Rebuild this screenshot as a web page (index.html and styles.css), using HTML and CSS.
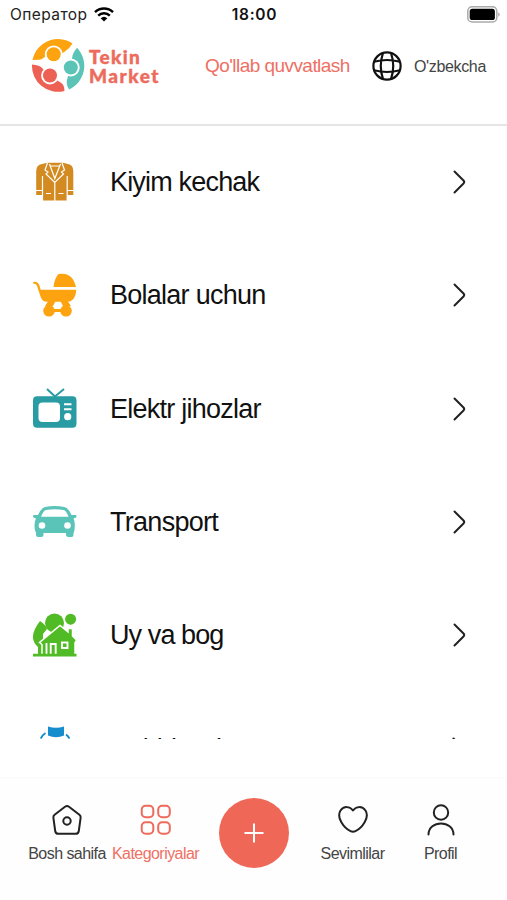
FILE: index.html
```html
<!DOCTYPE html>
<html lang="uz">
<head>
<meta charset="utf-8">
<title>Tekin Market</title>
<link rel="stylesheet" href="styles.css">
</head>
<body>
<div class="status">
  <div class="carrier"><span class="carrier-name">Оператор</span>
    <svg class="wifi" viewBox="0 0 20 15"><g fill="none" stroke="#000" stroke-width="2.5"><path d="M1 5.2a13 13 0 0 1 18 0"/><path d="M4.2 8.6a8.3 8.3 0 0 1 11.6 0"/></g><path d="M6.7 11.3a4.8 4.8 0 0 1 6.6 0L10 14.6Z"/></svg>
  </div>
  <span class="clock">18:00</span>
  <svg class="battery" viewBox="0 0 33 17"><rect x=".8" y=".8" width="29" height="15.2" rx="4.3" fill="#fff" stroke="#aaa" stroke-width="1.5"/><rect x="2.7" y="2.8" width="25.2" height="11.2" rx="2.6"/><path d="M31.2 6.2v4.6q1.6-.8 1.6-2.3t-1.6-2.3" fill="#aaa"/></svg>
</div>
<header class="header">
  <div class="brand">
    <svg class="brand-mark" viewBox="0 0 54 54">
      <path d="M1.500 21A26 26 0 0 1 41.500 4.500Q39 9 34 12.500L30 15Q22 15 15 17Q11 20.500 8 20.700Z" fill="#fda310"/>
      <path d="M46 8.800A26 26 0 0 1 38 50.500Q35 46 36 41L38 33L41 20Q41 15 46 8.800Z" fill="#5bc4b7"/>
      <path d="M1 25.500A26 26 0 0 0 33.500 52L33 48Q32 44 27 42L19 36L11 29Q9 26 1 25.500Z" fill="#ed6054"/>
      <g fill="#fff"><circle cx="22.700" cy="15.300" r="8.900"/><circle cx="39.800" cy="28.500" r="8.900"/><circle cx="19" cy="36.500" r="8.900"/></g>
      <circle cx="22.700" cy="15.300" r="7" fill="#fda310"/>
      <circle cx="39.800" cy="28.500" r="7" fill="#5bc4b7"/>
      <circle cx="19" cy="36.500" r="7" fill="#ed6054"/>
    </svg>
    <div class="brand-name"><span class="brand-a">Tekin</span><span class="brand-b">Market</span></div>
  </div>
  <a class="support">Qo'llab quvvatlash</a>
  <svg class="globe" viewBox="0 0 30 30" fill="none" stroke="#111" stroke-width="2.2"><circle cx="15" cy="15" r="13.6"/><path d="M11 2Q6.5 15 11 28M19 2Q23.5 15 19 28M2 10.700Q15 7.300 28 10.700M2 19.300Q15 22.700 28 19.300"/></svg>
  <span class="lang">O'zbekcha</span>
</header>
<main class="list">
  <div class="row">
    <svg class="icon" viewBox="0 0 44 44"><path d="M3.2 34V10Q3.2 4 9 3L14.5 1.800H30L35 3Q40.300 4 40.300 10V34H34V39.500H10V34Z" fill="#d38b21"/><g fill="none" stroke="#fff" stroke-width="1.200"><path d="M14.500 2L12 9l3 2-2 2 8.800 8.500L30.500 13l-2-2 3-2L29 2M17 5h10M16.500 3L21.800 17.500 27.500 3M21.800 20v20M9.500 15v25M34.200 15v25M3 29.500h6.500M34.200 29.500H41M13 32.500h5M25.500 32.500h5"/></g></svg>
    <span class="label l1">Kiyim kechak</span><svg class="chev" viewBox="0 0 14 24"><path d="M1.500 1.500l9 9q1.400 1.500 0 3l-9 9"/></svg>
  </div>
  <div class="row">
    <svg class="icon up" viewBox="0 0 44 44" fill="#fda310"><path d="M1.200 8.800q4.300 0 5.300 4l1.200 4H43.200q-.2 6-3 9.500-2.200 2.500-6 2.500H14q-4.500 0-6.200-4.500L4 13q-.7-2.300-2.800-2.300Q0 10.500 0 9.700T1.200 8.800Z"/><path d="M20.500 14Q21.500 5 25.500 1q14-2.500 17.500 13Z"/><circle cx="16" cy="37.800" r="5.800"/><circle cx="33" cy="37.800" r="5.800"/><path d="M16 27l-4 6h8l3-6ZM27 27l3 6h8l-4-6ZM20 36h9v3h-9Z"/></svg>
    <span class="label l2">Bolalar uchun</span><svg class="chev" viewBox="0 0 14 24"><path d="M1.500 1.500l9 9q1.400 1.500 0 3l-9 9"/></svg>
  </div>
  <div class="row">
    <svg class="icon" viewBox="0 0 44 44"><path d="M14 2l8 7.500L31 2" fill="none" stroke="#299ba3" stroke-width="2"/><rect y="9.200" width="43.500" height="31.500" rx="4" fill="#299ba3"/><rect x="5.500" y="15.500" width="21.500" height="19.500" rx="4" fill="#fff"/><path d="M31 17.300h7.500M31 22.300h7.500" stroke="#fff" stroke-width="2"/><circle cx="34.700" cy="29.700" r="3.600" fill="#fff"/></svg>
    <span class="label l3">Elektr jihozlar</span><svg class="chev" viewBox="0 0 14 24"><path d="M1.500 1.500l9 9q1.400 1.500 0 3l-9 9"/></svg>
  </div>
  <div class="row">
    <svg class="icon" viewBox="0 0 44 44"><path d="M.8 15H5Q8.200 8 12 7q9.700-1.800 19.500 0 4 1 7 8h4q1 0 1 1.200t-1 1.600l-2 .7q1.400 2.500 1.300 6.500 0 6-1.300 8V35q0 2-2 2h-3q-2.500 0-2.500-2v-2H10.500v2q0 2-2.300 2H5q-2 0-2-2v-2.500Q1.500 30.500 1.500 25q0-4 1.500-6.500L1 17.800q-1-.4-1-1.500T.8 15Z" fill="#5bc4b9"/><path d="M8 16.700Q10.500 10.500 13 10q8.700-1.700 17.500 0 2.700.5 5 6.700Z" fill="#fff"/><circle cx="9" cy="25.500" r="3.300" fill="#fff"/><circle cx="34.500" cy="25.500" r="3.300" fill="#fff"/></svg>
    <span class="label l4">Transport</span><svg class="chev" viewBox="0 0 14 24"><path d="M1.500 1.500l9 9q1.400 1.500 0 3l-9 9"/></svg>
  </div>
  <div class="row">
    <svg class="icon up" viewBox="0 0 44 44" fill="#51bb25"><path d="M7 8Q-6 25 5 34v8h5V21l4-5Q13 12 7 8Z"/><circle cx="21.500" cy="10" r="9.500"/><circle cx="37.600" cy="6.200" r="5.500"/><path d="M9 43V31.500L6.500 29.500 27 12.500l8 6.500v-3.500h4.500V23l4 4-1.500 3V43Z" stroke="#fff" stroke-width="1.500"/><path d="M0 40.800h43.500v2.700H0Z"/><path d="M13.500 30v10.800M17.700 40.800V31h5v9.800" fill="none" stroke="#fff" stroke-width="1.900"/><rect x="29" y="29.500" width="5.500" height="5.500" fill="none" stroke="#fff" stroke-width="1.900"/></svg>
    <span class="label l5">Uy va bog</span><svg class="chev" viewBox="0 0 14 24"><path d="M1.500 1.500l9 9q1.400 1.500 0 3l-9 9"/></svg>
  </div>
  <div class="row">
    <svg class="icon up" viewBox="0 0 44 44" fill="#168dcd"><path d="M15 .5q8 2.500 16 0v9q-8 3.500-16 0Z"/><path d="M12.500 7q-3 2-4.800 5.500M33 8.500q2 1.500 3.500 4" fill="none" stroke="#168dcd" stroke-width="1.800"/></svg>
    <span class="label l6">Hobbi va k</span><svg class="chev last" viewBox="0 0 14 24"><path d="M1.500 1.500l9 9q1.400 1.500 0 3l-9 9"/></svg>
  </div>
</main>
<nav class="nav">
  <div class="tab t1"><svg viewBox="0 0 32 32"><path d="M14 2.800q2-1.400 4 0l10.400 8q1.600 1.200 1.200 3L27.800 27q-.4 2.800-3.200 2.800H7.400q-2.800 0-3.200-2.800L2.400 13.800q-.4-1.800 1.200-3Z"/><circle cx="16" cy="17" r="3.700"/></svg><span>Bosh sahifa</span></div>
  <div class="tab t2"><svg viewBox="0 0 32 32"><rect x="1.700" y="1.700" width="11.600" height="11.600" rx="4"/><rect x="18.200" y="1.700" width="11.600" height="11.600" rx="4"/><rect x="1.700" y="18.200" width="11.600" height="11.600" rx="4"/><rect x="18.200" y="18.200" width="11.600" height="11.600" rx="4"/></svg><span>Kategoriyalar</span></div>
  <div class="add"><svg viewBox="0 0 20 20"><path d="M10 .5v19M.5 10h19"/></svg></div>
  <div class="tab t3"><svg viewBox="0 0 32 32"><path d="M16 6.500C13 2.500 7 1.500 3.500 6.500c-4.500 7 3.500 17.500 10 20.700q2.500 1.200 5 0C25 24 33 13.500 28.500 6.500 25 1.500 19 2.500 16 6.500Z"/></svg><span>Sevimlilar</span></div>
  <div class="tab t4"><svg viewBox="0 0 32 32"><circle cx="16" cy="8.500" r="7.200"/><path d="M3.500 30.500C3.500 15.800 28.500 15.800 28.500 30.500"/></svg><span>Profil</span></div>
</nav>
</body>
</html>
```
FILE: styles.css
```css
* { box-sizing: border-box; }
body { margin: 0; width: 507px; height: 900px; overflow: hidden; background: #fff; color: #111; font-family: "Liberation Sans", Arial, sans-serif; display: flex; flex-direction: column; }
svg { display: block; flex: none; }
span, a { white-space: nowrap; }
.status { height: 30px; display: grid; grid-template-columns: 1fr auto 1fr; align-items: center; padding: 0 8px 1px 10px; font-family: Inter, sans-serif; flex: none; }
.carrier { display: flex; align-items: center; gap: 7px; }
.carrier-name { font-size: 15.5px; letter-spacing: .42px; color: #222; }
.wifi { width: 20px; height: 15px; }
.clock { font-size: 15.5px; font-weight: 600; letter-spacing: .7px; }
.battery { width: 33px; height: 17px; justify-self: end; margin-right: -1px; }
.header { height: 96px; flex: none; display: flex; align-items: center; padding: 0 0 22px 31px; border-bottom: 2px solid #e5e5e5; }
.brand { display: flex; align-items: center; width: 174px; gap: 4px; }
.brand-mark { width: 54px; height: 54px; }
.brand-name { display: flex; flex-direction: column; font-family: Lato, sans-serif; font-weight: 900; font-size: 19px; line-height: 19px; color: #ed6b5c; -webkit-text-stroke: .4px #ed6b5c; }
.brand-a { letter-spacing: 1.3px; }
.brand-b { letter-spacing: 1.5px; }
.support { color: #ee7064; font-size: 19px; width: 167px; letter-spacing: -.55px; }
.globe { width: 30px; height: 30px; margin-right: 12px; }
.lang { font-size: 16px; letter-spacing: -.35px; padding-top: 1px; color: #444; }
.list { height: 612.5px; flex: none; overflow: hidden; }
.row { height: 113.25px; display: flex; align-items: center; padding: 0 40px 0 33px; }
.icon { width: 44px; height: 44px; margin-right: 33px; }
.up { margin-bottom: 2px; }
.label { flex: 1; font-size: 27px; letter-spacing: -.8px; }
.l1 { letter-spacing: -.82px; }
.l2 { letter-spacing: -.74px; }
.l3 { letter-spacing: -.75px; }
.l4 { letter-spacing: -.72px; }
.l5 { letter-spacing: -.9px; }
.l6 { letter-spacing: -.9px; padding-top: 2px; }
.chev { width: 14px; height: 24px; margin-bottom: 1px; fill: none; stroke: #222; stroke-width: 2; stroke-linecap: round; }
.last { margin: 1px 1px 0 -1px; }
.nav { flex: none; margin-top: 38.5px; height: 123px; display: grid; grid-template-columns: 106px 98px 87px 95px 81px; align-items: start; padding: 26px 0 0 14px; border-top: 1px solid #fafafa; background: #fefefe; }
.tab { display: flex; flex-direction: column; align-items: center; gap: 8px; font-size: 16px; line-height: 20px; letter-spacing: -.55px; color: #444; }
.tab svg { width: 32px; height: 32px; fill: none; stroke: #222; stroke-width: 2; stroke-linecap: round; stroke-linejoin: round; }
.t1 svg { margin-right: 1px; }
.t2 { color: #ee7064; padding-right: 27px; }
.t2 svg { stroke: #ed6b5c; }
.add { width: 70px; height: 70px; border-radius: 50%; background: #ef6756; display: flex; align-items: center; justify-content: center; margin: -6px 0 0 1px; }
.add svg { width: 20px; height: 20px; stroke: #fff; stroke-width: 2; }
```
